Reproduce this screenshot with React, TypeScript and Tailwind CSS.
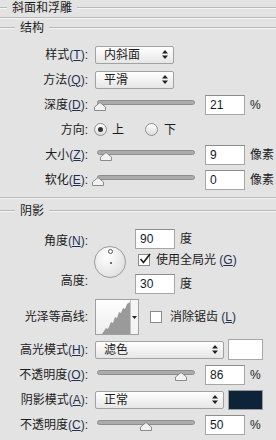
import type { ReactNode } from "react";

const FONTE = "font-['Liberation_Sans','Noto_Sans_CJK_SC',sans-serif]";

function Sulco({ className = "" }: { className?: string }) {
  return <div className={`h-[2px] border-t border-b border-t-[#b8b8b8] border-b-[#f6f6f6] ${className}`} />;
}

function Titulo({ recuo, children }: { recuo: string; children: ReactNode }) {
  return (
    <div className="flex h-[16px] items-center">
      <Sulco className={recuo} />
      <span className="px-[5px] leading-none">{children}</span>
      <Sulco className="flex-1" />
    </div>
  );
}

function Rotulo({ texto, tecla }: { texto: string; tecla?: string }) {
  return (
    <span className="w-[88px] shrink-0 text-right whitespace-nowrap">
      {texto}
      {tecla ? (
        <span className="text-[#22304e]">
          (<u className="underline-offset-1">{tecla}</u>)
        </span>
      ) : null}
      :
    </span>
  );
}

function Setas() {
  return (
    <svg width="6" height="9" viewBox="0 0 6 9">
      <path d="M3 0 L6 3.5 L0 3.5 Z M0 5.5 L6 5.5 L3 9 Z" fill="#222" />
    </svg>
  );
}

function Selecao({ valor, largura }: { valor: string; largura: string }) {
  return (
    <div
      className={`ml-[7px] flex h-[18px] ${largura} items-center justify-between rounded-[2px] border border-[#a2a2a2] bg-linear-to-b from-white to-[#e6e6e6] pr-[5px] pl-[8px]`}
    >
      <span className="leading-none">{valor}</span>
      <Setas />
    </div>
  );
}

function Trilho({ pos }: { pos: number }) {
  return (
    <div className="relative ml-[9px] h-[14px] w-[98px] shrink-0">
      <div className="absolute top-[2px] right-0 left-0 h-[5px] rounded-full border border-[#8d8d8d] bg-[#ababab]" />
      <svg className="absolute top-[4px]" style={{ left: pos }} width="12" height="9" viewBox="0 0 12 9">
        <path d="M6 0.5 L11.5 5 L11.5 8.5 L0.5 8.5 L0.5 5 Z" fill="#f2f2f2" stroke="#8a8a8a" />
      </svg>
    </div>
  );
}

function Entrada({ valor, className = "ml-[10px]" }: { valor: string; className?: string }) {
  return (
    <div
      className={`flex h-[20px] w-[40px] shrink-0 items-center border border-[#a6a6a6] border-t-[#8c8c8c] bg-white pl-[4px] leading-none text-[#141a2a] ${className}`}
    >
      {valor}
    </div>
  );
}

function Radio({ marcado }: { marcado?: boolean }) {
  return (
    <div className="flex h-[13px] w-[13px] items-center justify-center rounded-full border border-[#8f8f8f] bg-linear-to-b from-white to-[#dcdcdc]">
      {marcado ? <div className="h-[5px] w-[5px] rounded-full bg-[#333]" /> : null}
    </div>
  );
}

function Caixa({ marcada }: { marcada?: boolean }) {
  return (
    <div className="relative h-[12px] w-[12px] shrink-0 border border-[#8a8a8a] bg-white">
      {marcada ? (
        <svg className="absolute -top-[2px] left-[0px]" width="12" height="12" viewBox="0 0 12 12">
          <path d="M1.5 6 L4.5 9.5 L11 1" fill="none" stroke="#1d1d1d" strokeWidth="1.6" />
        </svg>
      ) : null}
    </div>
  );
}

function LinhaTrilho({ rotulo, tecla, pos, valor, unidade }: { rotulo: string; tecla: string; pos: number; valor: string; unidade: string }) {
  return (
    <div className="flex h-[25px] items-center">
      <Rotulo texto={rotulo} tecla={tecla} />
      <Trilho pos={pos} />
      <Entrada valor={valor} />
      <span className="ml-[5px] leading-none">{unidade}</span>
    </div>
  );
}

export default function App() {
  return (
    <div className={`h-[440px] w-[276px] overflow-hidden bg-[#e3e3e3] text-[12px] text-[#1b1b1b] ${FONTE}`}>
      <Titulo recuo="w-[7px]">斜面和浮雕</Titulo>
      <Sulco className="mt-[1px]" />
      <div className="mt-[1px]">
        <Titulo recuo="w-[15px]">结构</Titulo>
      </div>

      <div className="mt-[6px]">
        <div className="flex h-[25px] items-center">
          <Rotulo texto="样式" tecla="T" />
          <Selecao valor="内斜面" largura="w-[79px]" />
        </div>
        <div className="flex h-[25px] items-center">
          <Rotulo texto="方法" tecla="Q" />
          <Selecao valor="平滑" largura="w-[79px]" />
        </div>
        <LinhaTrilho rotulo="深度" tecla="D" pos={-3} valor="21" unidade="%" />
        <div className="flex h-[25px] items-center">
          <Rotulo texto="方向" />
          <div className="ml-[6px]">
            <Radio marcado />
          </div>
          <span className="ml-[5px] leading-none">上</span>
          <div className="ml-[21px]">
            <Radio />
          </div>
          <span className="ml-[6px] leading-none">下</span>
        </div>
        <LinhaTrilho rotulo="大小" tecla="Z" pos={3} valor="9" unidade="像素" />
        <LinhaTrilho rotulo="软化" tecla="E" pos={-5} valor="0" unidade="像素" />
      </div>

      <Sulco className="mt-[5px]" />
      <div className="mt-[4px]">
        <Titulo recuo="w-[15px]">阴影</Titulo>
      </div>

      {/* ângulo, disco e altitude */}
      <div className="flex">
        <div className="flex w-[88px] shrink-0 flex-col items-end pt-[14px]">
          <div className="flex h-[16px] items-center">
            角度<span className="text-[#22304e]">(<u>N</u>)</span>:
          </div>
          <div className="mt-[24px] flex h-[16px] items-center">高度:</div>
        </div>
        <div className="ml-[6px] pt-[27px]">
          <div className="relative h-[32px] w-[32px] rounded-full border border-[#9c9c9c] bg-radial-[at_40%_30%] from-white to-[#d8d8d8]">
            <div className="absolute top-[2px] left-[12.5px] h-[5px] w-[5px] rounded-full border border-[#555] bg-white" />
            <div className="absolute top-[14.5px] left-[14.5px] h-[2px] w-[2px] rounded-full bg-[#444]" />
          </div>
        </div>
        <div className="ml-[9px] flex flex-col pt-[10px]">
          <div className="flex items-center">
            <Entrada valor="90" className="" />
            <span className="ml-[5px] leading-none">度</span>
          </div>
          <div className="flex h-[22px] items-center pl-[3px]">
            <Caixa marcada />
            <span className="ml-[6px] leading-none">
              使用全局光 <span className="text-[#22304e]">(<u>G</u>)</span>
            </span>
          </div>
          <div className="mt-[3px] flex items-center">
            <Entrada valor="30" className="" />
            <span className="ml-[5px] leading-none">度</span>
          </div>
        </div>
      </div>

      <div className="mt-[5px] flex h-[36px] items-center">
        <span className="w-[88px] shrink-0 text-right">光泽等高线:</span>
        <div className="ml-[7px] flex h-[36px] w-[44px] border border-[#a0a0a0] bg-white">
          <svg width="34" height="34" viewBox="0 0 34 34" className="bg-linear-to-b from-white to-[#eeeeee]">
            <path
              d="M6 34 L10 28 L12 29 L15 22 L17 23 L19 17 L21 18 L23 12 L25 13 L27 8 L29 9 L31 4 L34 2 L34 34 Z"
              fill="#9a9a9a"
            />
          </svg>
          <div className="flex flex-1 items-center justify-center border-l border-[#c4c4c4] bg-[#f4f4f4]">
            <svg width="5" height="3" viewBox="0 0 5 3">
              <path d="M0 0 L5 0 L2.5 3 Z" fill="#222" />
            </svg>
          </div>
        </div>
        <div className="ml-[11px]">
          <Caixa />
        </div>
        <span className="ml-[8px] leading-none">
          消除锯齿 <span className="text-[#22304e]">(<u>L</u>)</span>
        </span>
      </div>

      <div className="mt-[2px]">
        <div className="flex h-[25px] items-center">
          <Rotulo texto="高光模式" tecla="H" />
          <Selecao valor="滤色" largura="w-[129px]" />
          <div className="ml-[4px] h-[21px] w-[35px] border border-[#a8a8a8] bg-white" />
        </div>
        <LinhaTrilho rotulo="不透明度" tecla="O" pos={78} valor="86" unidade="%" />
        <div className="flex h-[25px] items-center">
          <Rotulo texto="阴影模式" tecla="A" />
          <Selecao valor="正常" largura="w-[129px]" />
          <div className="ml-[4px] h-[20px] w-[35px] border border-[#9a9a9a] bg-[#0c2339]" />
        </div>
        <LinhaTrilho rotulo="不透明度" tecla="C" pos={43} valor="50" unidade="%" />
      </div>
    </div>
  );
}
